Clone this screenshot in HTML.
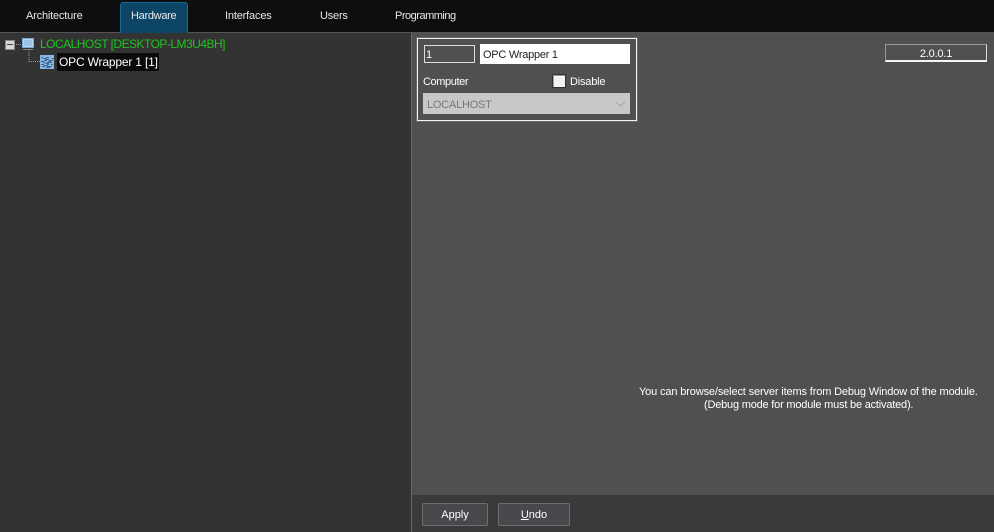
<!DOCTYPE html>
<html><head><meta charset="utf-8">
<style>
html,body{margin:0;padding:0;background:#333}
#r{position:relative;width:994px;height:532px;overflow:hidden;background:#333;font:11px/14px "Liberation Sans",sans-serif;color:#fff}
#r div{position:absolute;white-space:nowrap;box-sizing:border-box}
.tab{top:9px;line-height:15px;color:#e8e8e8}
</style></head><body><div id="r">
<div style="left:0;top:0;width:994px;height:32px;background:#0e0e0f"></div>
<div style="left:0;top:32px;width:994px;height:1px;background:#555"></div>
<div style="left:120px;top:2px;width:68px;height:31px;background:#0c4566;border:1px solid #1a6690;border-bottom:0;border-radius:3px 3px 0 0"></div>
<div class="tab" style="left:26px;letter-spacing:-.18px">Architecture</div>
<div class="tab" style="left:131px;letter-spacing:-.29px">Hardware</div>
<div class="tab" style="left:225px;letter-spacing:-.17px">Interfaces</div>
<div class="tab" style="left:320px;letter-spacing:-.2px">Users</div>
<div class="tab" style="left:395px;letter-spacing:-.49px">Programming</div>

<div style="left:0;top:33px;width:411px;height:499px;background:#333"></div>
<div style="left:411px;top:33px;width:1px;height:499px;background:#6a6a6a"></div>
<div style="left:412px;top:33px;width:582px;height:462px;background:#505050"></div>
<div style="left:412px;top:495px;width:582px;height:37px;background:#3a3a3a"></div>

<svg style="position:absolute;left:0;top:33px" width="60" height="40" shape-rendering="crispEdges">
<path d="M14 11.500H22M29 18V29M29 28.500H40" stroke="#999" stroke-dasharray="1 1" fill="none"/>
<rect x="5.500" y="7.500" width="9" height="9" fill="#d8d8d8" stroke="#888"/><rect x="7" y="11" width="6" height="1" fill="#444"/>
<rect x="22.500" y="5.500" width="11" height="9" fill="#bcd8f0" stroke="#6fa8dc"/><rect x="24" y="7" width="8" height="6" fill="#9cc3e6"/><path d="M23 16.500H33" stroke="#789"/>
<rect x="40" y="22" width="14" height="14" fill="#8db4da"/>
<path d="M41 24h2M46 24h3M43 25h4M52 25h2M45 26h4M44 27h3M49 27h4M41 28h3M48 28h3M43 29h2M47 29h5M45 30h4M41 31h3M47 31h2M51 31h2M44 32h4M42 33h3M47 33h5M46 34h4" stroke="#3d6a9a" stroke-width="1" transform="translate(0,.5)"/>
</svg>
<div style="left:40px;top:37px;font-size:12px;color:#1fc41f;line-height:14px;letter-spacing:-.52px">LOCALHOST [DESKTOP-LM3U4BH]</div>
<div style="left:57px;top:53px;width:102px;height:18px;background:#0b0b0b"></div>
<div style="left:59px;top:55px;font-size:12px;line-height:14px;letter-spacing:-.18px">OPC Wrapper 1 [1]</div>

<div style="left:417px;top:38px;width:220px;height:83px;border:1px solid #f2f2f2;box-shadow:0 0 0 1px rgba(255,255,255,.15)"></div>
<div style="left:424px;top:45px;width:51px;height:18px;border:1px solid #ddd;padding-left:1px;line-height:18px">1</div>
<div style="left:480px;top:44px;width:150px;height:20px;background:#fff;color:#222;padding-left:3px;line-height:22px;letter-spacing:-.25px">OPC Wrapper 1</div>
<div style="left:423px;top:75px;letter-spacing:-.4px">Computer</div>
<div style="left:552px;top:74px;width:14px;height:14px;background:#f2f2f2;border:1px solid #333;box-shadow:inset 1px 1px 0 #999"></div>
<div style="left:570px;top:75px;letter-spacing:-.2px">Disable</div>
<div style="left:423px;top:93px;width:207px;height:21px;background:#c8c8c8"></div>
<div style="left:427px;top:98px;color:#777;letter-spacing:-.22px">LOCALHOST</div>
<svg style="position:absolute;left:615px;top:100px" width="12" height="8"><path d="M1 1.500L5.500 6L10 1.500" stroke="#aaa" stroke-width="1.200" fill="none"/></svg>

<div style="left:885px;top:44px;width:102px;height:18px;border:1px solid #999;border-bottom:2px solid #f4f4f4;border-right-color:#ddd;text-align:center;line-height:18px;letter-spacing:-.2px">2.0.0.1</div>

<div style="left:639px;top:385px;letter-spacing:-.14px">You can browse/select server items from Debug Window of the module.</div>
<div style="left:704px;top:398px;letter-spacing:-.2px">(Debug mode for module must be activated).</div>

<div style="left:422px;top:503px;width:66px;height:23px;background:#48484c;border:1px solid #6e6e6e;border-radius:2px;text-align:center;line-height:22px">Apply</div>
<div style="left:498px;top:503px;width:72px;height:23px;background:#48484c;border:1px solid #6e6e6e;border-radius:2px;text-align:center;line-height:22px"><u>U</u>ndo</div>
</div></body></html>
